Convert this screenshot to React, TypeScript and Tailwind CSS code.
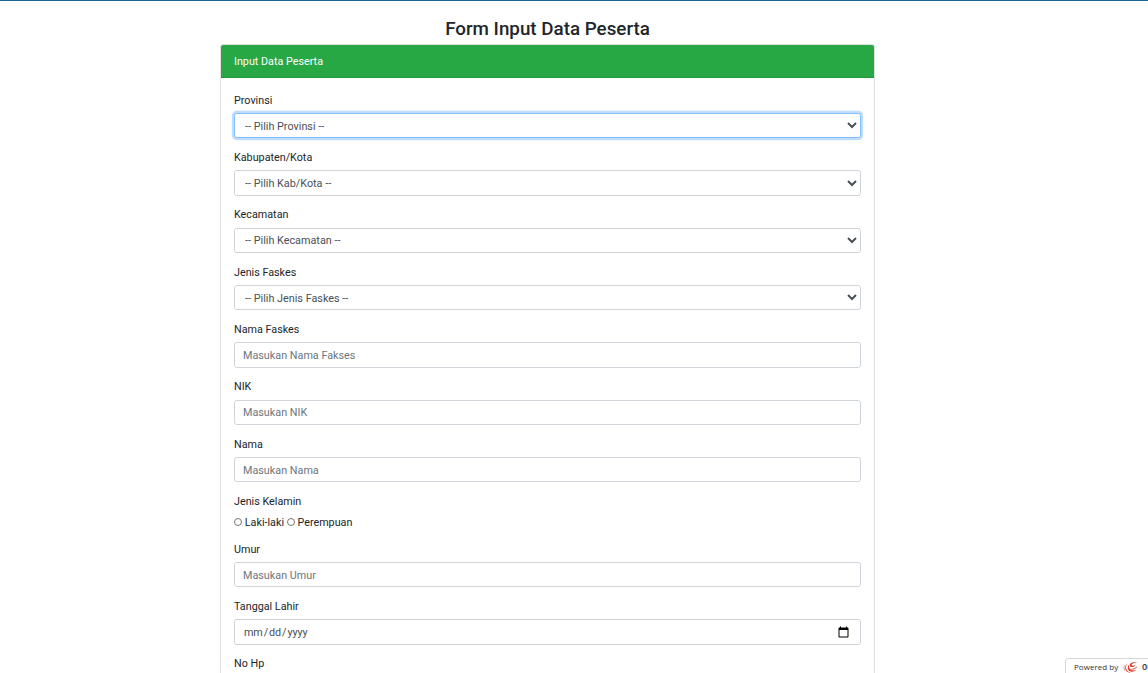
import React from 'react';

const control =
  'block h-[25.44px] w-full rounded-[2.7px] border bg-white text-[10.8px] leading-[16px] text-[#495057] outline-none placeholder:text-[#6c757d] placeholder:opacity-100';

function Field({ label, children }: { label: string; children: React.ReactNode }) {
  return (
    <div className="mb-[11.59px]">
      <label className="mb-[4.3px] block h-[16px] leading-[16px]">{label}</label>
      {children}
    </div>
  );
}

function SelectField({ label, option, active = false }: { label: string; option: string; active?: boolean }) {
  return (
    <Field label={label}>
      <select
        className={`${control} pt-[0.9px] pl-[6px] pr-[3px] tracking-[0.01px] ${active ? 'border-[#80bdff] shadow-[0_0_0_2.14px_rgba(0,123,255,0.25)]' : 'border-[#ced4da]'}`}
      >
        <option>{option}</option>
      </select>
    </Field>
  );
}

function TextField({ label, placeholder }: { label: string; placeholder: string }) {
  return (
    <Field label={label}>
      <input type="text" placeholder={placeholder} className={`${control} border-[#ced4da] px-[8px] pt-[1px]`} />
    </Field>
  );
}

function Radio({ label }: { label: string }) {
  return (
    <label className="flex items-start">
      <input type="radio" name="gender" className="mt-[3.8px] mr-[2.8px] h-[8px] w-[8px]" />
      <span className="pt-[0.5px]">{label}</span>
    </label>
  );
}

function SwirlLogo() {
  return (
    <svg viewBox="0 0 16 14" className="mt-[2px] -ml-[1px] h-[13px] w-[17px] shrink-0" fill="#e0392b">
      <path d="M15.5 1.7C12 1.8 9.5 2.7 9 4.4c1.2 1 3.1.7 4.4-.4-.6 2.4-4.2 3.5-5.8 1.7C6 3.500 9 .2 15.500 1.700Z" />
      <path d="M15.6 5c-.8 3.400-5 5.200-8.200 3.500 2.900.5 5.900-.9 8.200-3.500Z" />
      <path d="M14.500 9.500c-3.500 3.400-8.700 2.400-9.300-1.500-.2-1.700.4-3.200 1.400-4.200-1.200 4.800 2.500 7.700 7.900 5.700Z" />
      <path d="M5 2.400C1.500 6 3 11.500 8.500 12.600 2.500 13-.2 6 5 2.400Z" />
      <path d="M2.200 3.800C.8 6 .9 8.700 2.300 11 .1 9 0 5.900 2.200 3.800Z" />
    </svg>
  );
}

export default function App() {
  return (
    <div className="relative h-[673px] overflow-hidden border-t border-[#17648d] bg-white font-['Roboto',sans-serif] text-[10.78px] text-[#212529]">
      <main className="ml-[220px] w-[655px] pt-[17px]">
        <h3 className="mb-[4px] text-center text-[18.8px] leading-[22px] font-medium">Form Input Data Peserta</h3>
        <section className="rounded-[2.7px] border border-[#dfdfdf]">
          <header className="h-[33px] rounded-t-[2px] border-b border-[#24963e] bg-[#28a745] px-[13px] pt-[8.6px] leading-[16px] text-white">
            Input Data Peserta
          </header>
          <form className="px-[13px] pt-[14.75px]">
            <SelectField label="Provinsi" option="-- Pilih Provinsi --" active />
            <SelectField label="Kabupaten/Kota" option="-- Pilih Kab/Kota --" />
            <SelectField label="Kecamatan" option="-- Pilih Kecamatan --" />
            <SelectField label="Jenis Faskes" option="-- Pilih Jenis Faskes --" />
            <TextField label="Nama Faskes" placeholder="Masukan Nama Fakses" />
            <TextField label="NIK" placeholder="Masukan NIK" />
            <TextField label="Nama" placeholder="Masukan Nama" />
            <Field label="Jenis Kelamin">
              <div className="flex h-[15.9px] items-start gap-[2.6px] leading-[16px]">
                <Radio label="Laki-laki" />
                <Radio label="Perempuan" />
              </div>
            </Field>
            <TextField label="Umur" placeholder="Masukan Umur" />
            <Field label="Tanggal Lahir">
              <input
                type="date"
                className={`${control} border-[#ced4da] pt-[1.1px] pr-[10px] pl-[8px] [&::-webkit-calendar-picker-indicator]:h-[13px] [&::-webkit-calendar-picker-indicator]:w-[13px] [&::-webkit-calendar-picker-indicator]:p-0 [&::-webkit-datetime-edit]:tracking-[-0.1px]`}
              />
            </Field>
            <TextField label="No Hp" placeholder="Masukan No Hp" />
          </form>
        </section>
      </main>
      <aside className="absolute top-[657px] left-[1065px] flex h-[20px] w-[100px] items-start rounded-tl-[3px] border border-[#d6d6d6] bg-white pl-[8px] font-['Open_Sans',sans-serif] text-[8px] leading-[16px] text-[#333]">
        <span className="w-[49px] shrink-0 tracking-[0.04px] whitespace-nowrap">Powered by</span>
        <SwirlLogo />
        <span className="ml-[3px] text-[9px] font-semibold whitespace-nowrap">000webhost</span>
      </aside>
    </div>
  );
}
